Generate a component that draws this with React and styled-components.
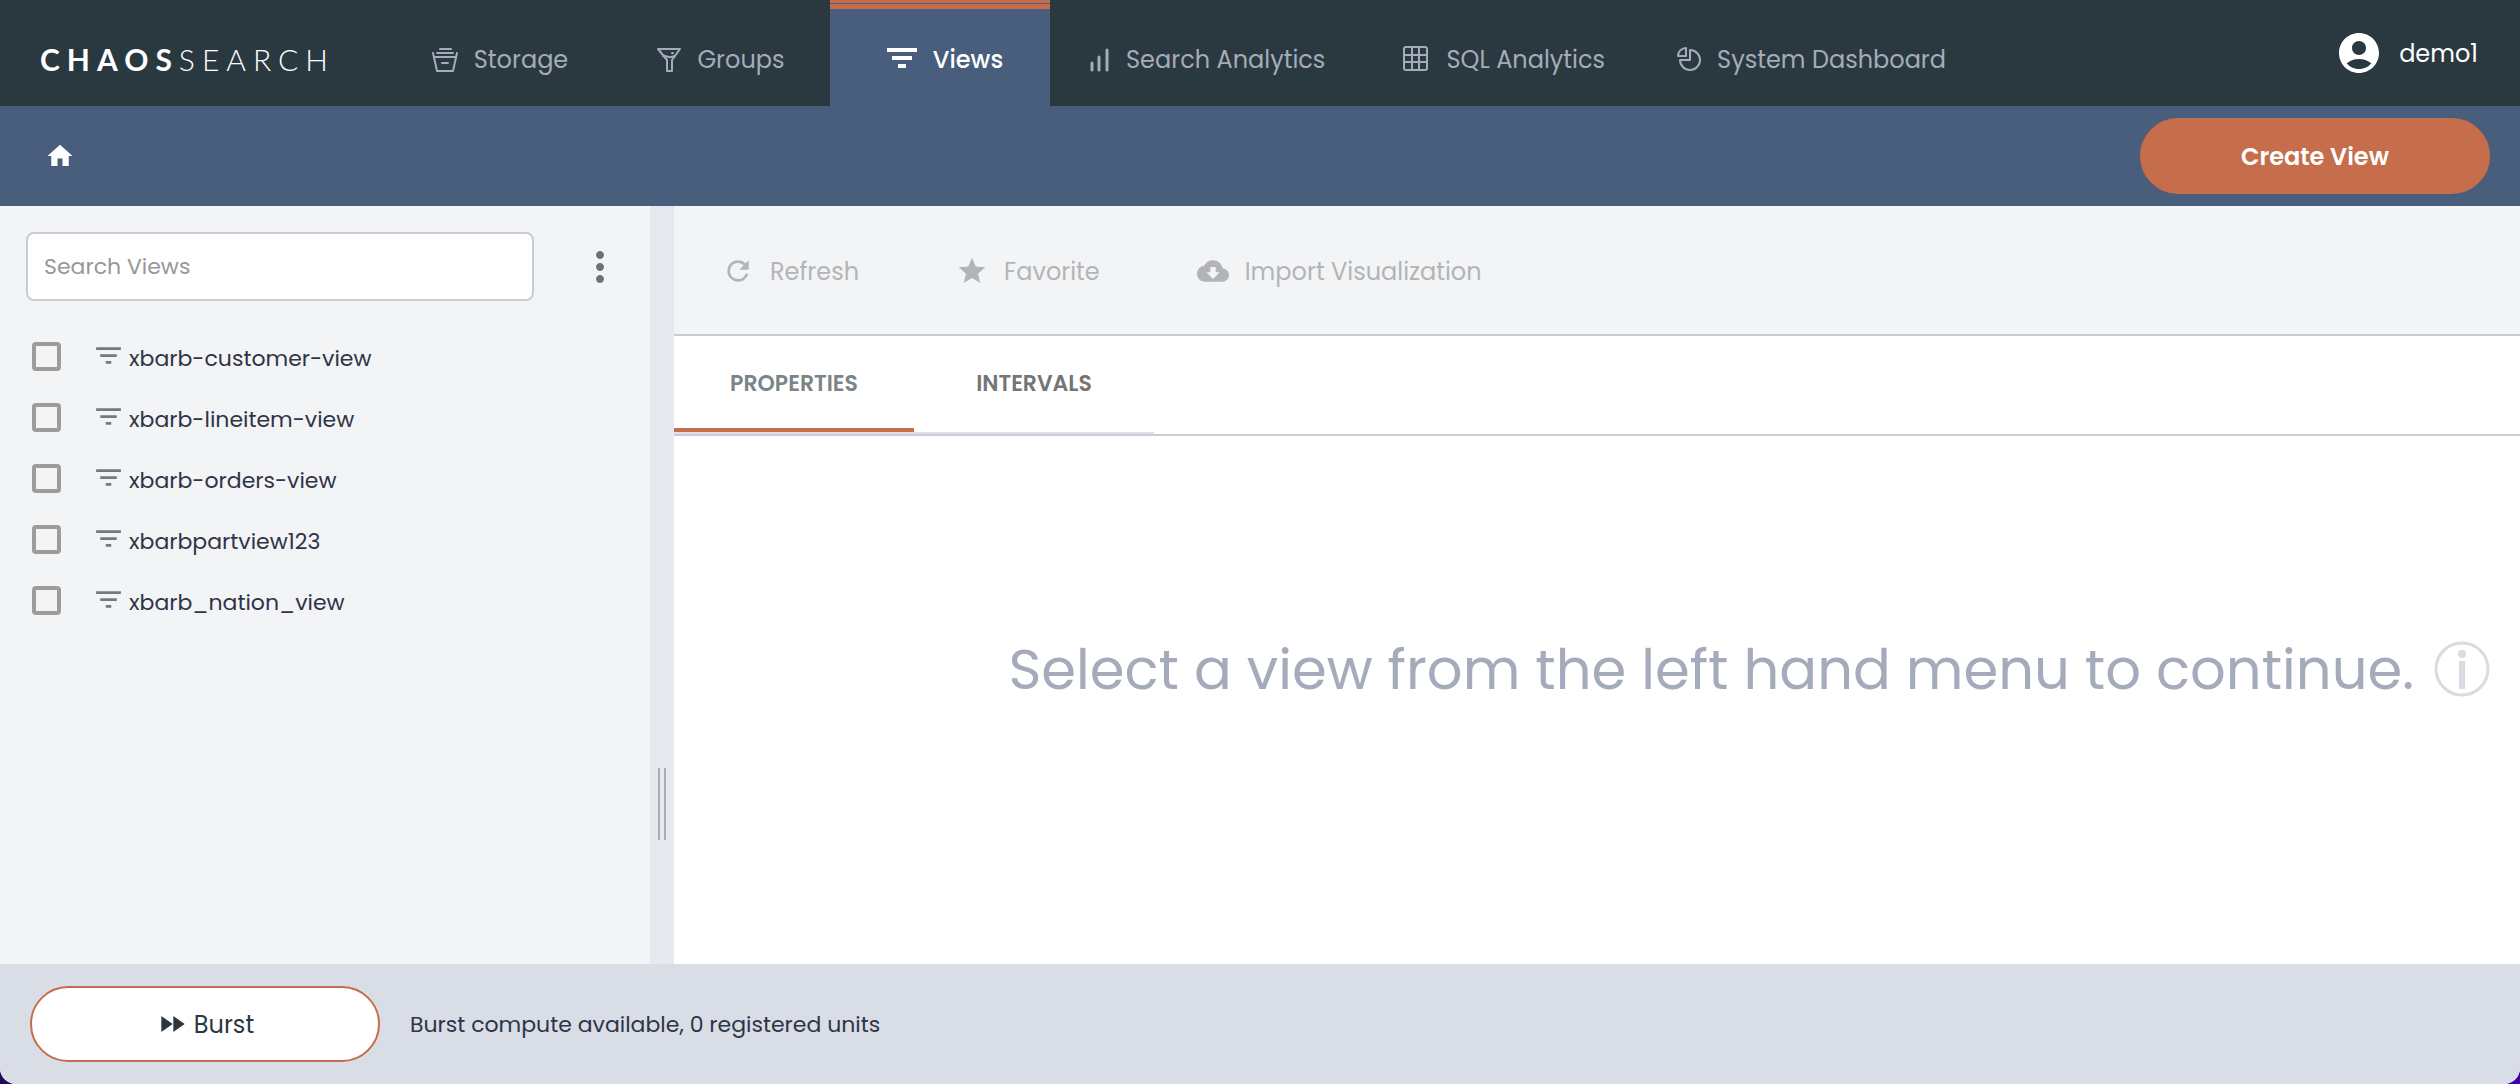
import { useState } from "react";
import styled, { createGlobalStyle } from "styled-components";
import {
  MdHome,
  MdAccountCircle,
  MdMoreVert,
  MdRefresh,
  MdStar,
  MdCloudDownload,
  MdFastForward,
  MdFilterList,
} from "react-icons/md";

const GlobalStyle = createGlobalStyle`
  * {
    box-sizing: border-box;
  }
  html, body, #root {
    height: 100%;
  }
  body {
    margin: 0;
    background: linear-gradient(90deg, #200a5c 50%, #4400a8 50%);
    font-family: Poppins, Inter, "Liberation Sans", sans-serif;
    font-size: 22px;
    color: #2f3447;
  }
  button, input {
    font-family: inherit;
    font-size: inherit;
  }
`;

const Page = styled.div`
  display: flex;
  flex-direction: column;
  min-height: 100%;
  background: #fff;
  border-radius: 0 0 16px 16px;
  overflow: hidden;
`;

const TopBar = styled.header`
  display: flex;
  align-items: stretch;
  height: 106px;
  background: #2a3840;
`;

const Logo = styled.a`
  display: flex;
  align-items: center;
  width: 390px;
  padding: 12px 0 0 40px;
  font-family: Lato, sans-serif;
  font-size: 30px;
  font-weight: 300;
  letter-spacing: 7px;
  color: #fff;
  text-decoration: none;

  b {
    font-weight: 700;
  }
`;

const Nav = styled.nav`
  display: flex;
  flex: 1;
`;

const NavLink = styled.a`
  display: flex;
  align-items: center;
  justify-content: center;
  gap: 16px;
  min-width: 220px;
  padding: 10px 36px 0;
  border-top: 3px solid ${(props) => (props.$active ? "#c66d4c" : "transparent")};
  background: ${(props) => (props.$active ? "#495d7c" : "transparent")};
  box-shadow: ${(props) => (props.$active ? "inset 0 1px #495d7c, inset 0 6px #c66d4c" : "none")};
  color: ${(props) => (props.$active ? "#fff" : "#a5abba")};
  font-size: 24px;
  font-weight: ${(props) => (props.$active ? 500 : 400)};
  text-decoration: none;
`;

const User = styled.button`
  display: flex;
  align-items: center;
  gap: 16px;
  padding: 0 42px 0 0;
  border: 0;
  background: none;
  color: #fff;
  font-size: 24px;
`;

const SubBar = styled.div`
  display: flex;
  align-items: center;
  justify-content: space-between;
  height: 100px;
  padding: 0 30px 0 45px;
  background: #495d7c;
`;

const HomeLink = styled.a`
  display: flex;
  color: #fff;
`;

const PillButton = styled.button`
  display: flex;
  align-items: center;
  justify-content: center;
  gap: 6px;
  width: 350px;
  height: 76px;
  border: 2px solid #c66d4c;
  border-radius: 38px;
  background: ${(props) => (props.$primary ? "#c66d4c" : "#fff")};
  color: ${(props) => (props.$primary ? "#fff" : "#2a3840")};
  font-size: 24px;
  font-weight: ${(props) => (props.$primary ? 600 : 400)};
`;

const Content = styled.div`
  display: flex;
  flex: 1;
`;

const Sidebar = styled.aside`
  width: 650px;
  padding: 26px 26px 0;
  background: #f3f4f6;
`;

const SearchRow = styled.div`
  display: flex;
  align-items: center;
  gap: 42px;
`;

const SearchInput = styled.input`
  width: 508px;
  height: 69px;
  padding: 0 16px;
  border: 2px solid #c8ccd7;
  border-radius: 8px;
  background: #fff;

  &::placeholder {
    color: #979797;
    opacity: 1;
  }
`;

const IconButton = styled.button`
  display: flex;
  padding: 0;
  border: 0;
  background: none;
  color: #707173;
`;

const ViewList = styled.ul`
  margin: 25px 0 0;
  padding: 0 6px;
  list-style: none;
`;

const ViewItem = styled.li`
  display: flex;
  align-items: center;
  height: 61px;
`;

const Checkbox = styled.input`
  appearance: none;
  width: 29px;
  height: 29px;
  margin: 0 31px 0 0;
  border: 4px solid #9c9c9c;
  border-radius: 4px;

  &:checked {
    background: #c66d4c;
  }
`;

const ViewLabel = styled.label`
  display: flex;
  align-items: center;
  gap: 4px;
  padding-top: 4px;

  svg {
    margin-bottom: 6px;
    color: #77787a;
  }
`;

const Splitter = styled.div`
  display: flex;
  justify-content: center;
  align-items: center;
  gap: 4px;
  width: 24px;
  padding-top: 438px;
  background: #e7e9ee;
`;

const Grip = styled.span`
  width: 2px;
  height: 72px;
  background: #a5abbb;
`;

const Main = styled.main`
  display: flex;
  flex-direction: column;
  flex: 1;
`;

const Toolbar = styled.div`
  display: flex;
  align-items: center;
  gap: 97px;
  height: 130px;
  padding: 2px 0 0 48px;
  border-bottom: 2px solid #c8ccd5;
  background: #f3f4f6;
`;

const ToolButton = styled.button`
  display: flex;
  align-items: center;
  gap: 16px;
  padding: 0;
  border: 0;
  background: none;
  color: #b3b4b6;
  font-size: 24px;
`;

const TabBar = styled.div`
  display: flex;
  height: 100px;
  border-bottom: 2px solid #cbccd8;
`;

const Tab = styled.button`
  width: 240px;
  padding: 0 0 2px;
  border: 0;
  border-bottom: 2px solid #e0e0e4;
  background: none;
  box-shadow: ${(props) => (props.$active ? "inset 0 -4px #c66d4c" : "none")};
  color: ${(props) => (props.$active ? "#7b8489" : "#757575")};
  font-size: 22px;
  font-weight: 600;
`;

const Empty = styled.section`
  display: flex;
  align-items: center;
  justify-content: flex-end;
  gap: 20px;
  padding: 196px 30px 0 0;
  color: #a5abbb;
  font-size: 56px;
  line-height: 72px;

  p {
    margin: 2px 0 0;
  }
`;

const Footer = styled.footer`
  display: flex;
  align-items: center;
  gap: 30px;
  height: 120px;
  padding: 0 30px;
  background: #d9dde6;
`;

function BucketIcon() {
  return (
    <svg width="26" height="26" viewBox="0 0 26 26" fill="none" stroke="currentColor" strokeWidth="2" strokeLinejoin="round" strokeLinecap="round">
      <path d="M8 2h11M5 6h16M1 6l4 18h16l4-18M2 10h22M10 16h6" />
    </svg>
  );
}

function FunnelIcon() {
  return (
    <svg width="26" height="26" viewBox="-2 0 26 26" fill="none" stroke="currentColor" strokeWidth="2" strokeLinejoin="round" strokeLinecap="round">
      <path d="M1 2h22l-8 11v11h-5V13z" />
      <path d="M6 9c3-1 5 2 8 1l4-1M15 6h1" />
    </svg>
  );
}

function BarsIcon() {
  return (
    <svg width="24" height="26" viewBox="-4 0 24 26" fill="none" stroke="currentColor" strokeWidth="3" strokeLinecap="round">
      <path d="M2 16v7M9 10v13M17 3v20" />
    </svg>
  );
}

function GridIcon() {
  return (
    <svg width="33" height="28" viewBox="-6 0 33 28" fill="none" stroke="currentColor" strokeWidth="2">
      <rect x="1" y="1" width="23" height="23" rx="2" />
      <path d="M9 1v23M16 1v23M1 9h23M1 16h23" />
    </svg>
  );
}

function PieIcon() {
  return (
    <svg width="24" height="26" viewBox="0 0 24 26" fill="none" stroke="currentColor" strokeWidth="2" strokeLinejoin="round">
      <path d="M9 1v8H1a8 8 0 0 1 8-8z" />
      <path d="M13 3a10 10 0 1 1-10 10h10z" />
    </svg>
  );
}

function ViewsIcon() {
  return (
    <svg width="40" height="24" viewBox="-10 0 40 24" fill="currentColor">
      <path d="M0 0h30v4H0zM5 8h20v4H5zM11 16h8v4h-8z" />
    </svg>
  );
}

function InfoIcon() {
  return (
    <svg width="56" height="56" viewBox="0 0 56 56" fill="none" stroke="#dadbe1">
      <circle cx="28" cy="28" r="26" strokeWidth="3" />
      <path d="M28 20v28" strokeWidth="6" />
      <circle cx="28" cy="13" r="4" fill="#dadbe1" stroke="none" />
    </svg>
  );
}

const navItems = [
  { label: "Storage", icon: <BucketIcon /> },
  { label: "Groups", icon: <FunnelIcon /> },
  { label: "Views", icon: <ViewsIcon />, active: true },
  { label: "Search Analytics", icon: <BarsIcon /> },
  { label: "SQL Analytics", icon: <GridIcon /> },
  { label: "System Dashboard", icon: <PieIcon /> },
];

const views = [
  "xbarb-customer-view",
  "xbarb-lineitem-view",
  "xbarb-orders-view",
  "xbarbpartview123",
  "xbarb_nation_view",
];

export default function App() {
  const [tab, setTab] = useState("PROPERTIES");

  return (
    <>
      <GlobalStyle />
      <Page>
        <TopBar>
          <Logo href="#">
            <b>CHAOS</b>SEARCH
          </Logo>
          <Nav>
            {navItems.map((item) => (
              <NavLink key={item.label} href="#" $active={item.active}>
                {item.icon}
                {item.label}
              </NavLink>
            ))}
          </Nav>
          <User>
            <MdAccountCircle size={48} />
            demo1
          </User>
        </TopBar>
        <SubBar>
          <HomeLink href="#" aria-label="Home">
            <MdHome size={30} />
          </HomeLink>
          <PillButton $primary>Create View</PillButton>
        </SubBar>
        <Content>
          <Sidebar>
            <SearchRow>
              <SearchInput type="text" placeholder="Search Views" aria-label="Search Views" />
              <IconButton aria-label="More">
                <MdMoreVert size={48} />
              </IconButton>
            </SearchRow>
            <ViewList>
              {views.map((view) => (
                <ViewItem key={view}>
                  <Checkbox type="checkbox" id={view} />
                  <ViewLabel htmlFor={view}>
                    <MdFilterList size={33} />
                    {view}
                  </ViewLabel>
                </ViewItem>
              ))}
            </ViewList>
          </Sidebar>
          <Splitter>
            <Grip />
            <Grip />
          </Splitter>
          <Main>
            <Toolbar>
              <ToolButton>
                <MdRefresh size={32} />
                Refresh
              </ToolButton>
              <ToolButton>
                <MdStar size={32} />
                Favorite
              </ToolButton>
              <ToolButton>
                <MdCloudDownload size={32} />
                Import Visualization
              </ToolButton>
            </Toolbar>
            <TabBar>
              {["PROPERTIES", "INTERVALS"].map((name) => (
                <Tab key={name} $active={tab === name} onClick={() => setTab(name)}>
                  {name}
                </Tab>
              ))}
            </TabBar>
            <Empty>
              <p>Select a view from the left hand menu to continue.</p>
              <InfoIcon />
            </Empty>
          </Main>
        </Content>
        <Footer>
          <PillButton>
            <MdFastForward size={32} />
            Burst
          </PillButton>
          <span>Burst compute available, 0 registered units</span>
        </Footer>
      </Page>
    </>
  );
}
